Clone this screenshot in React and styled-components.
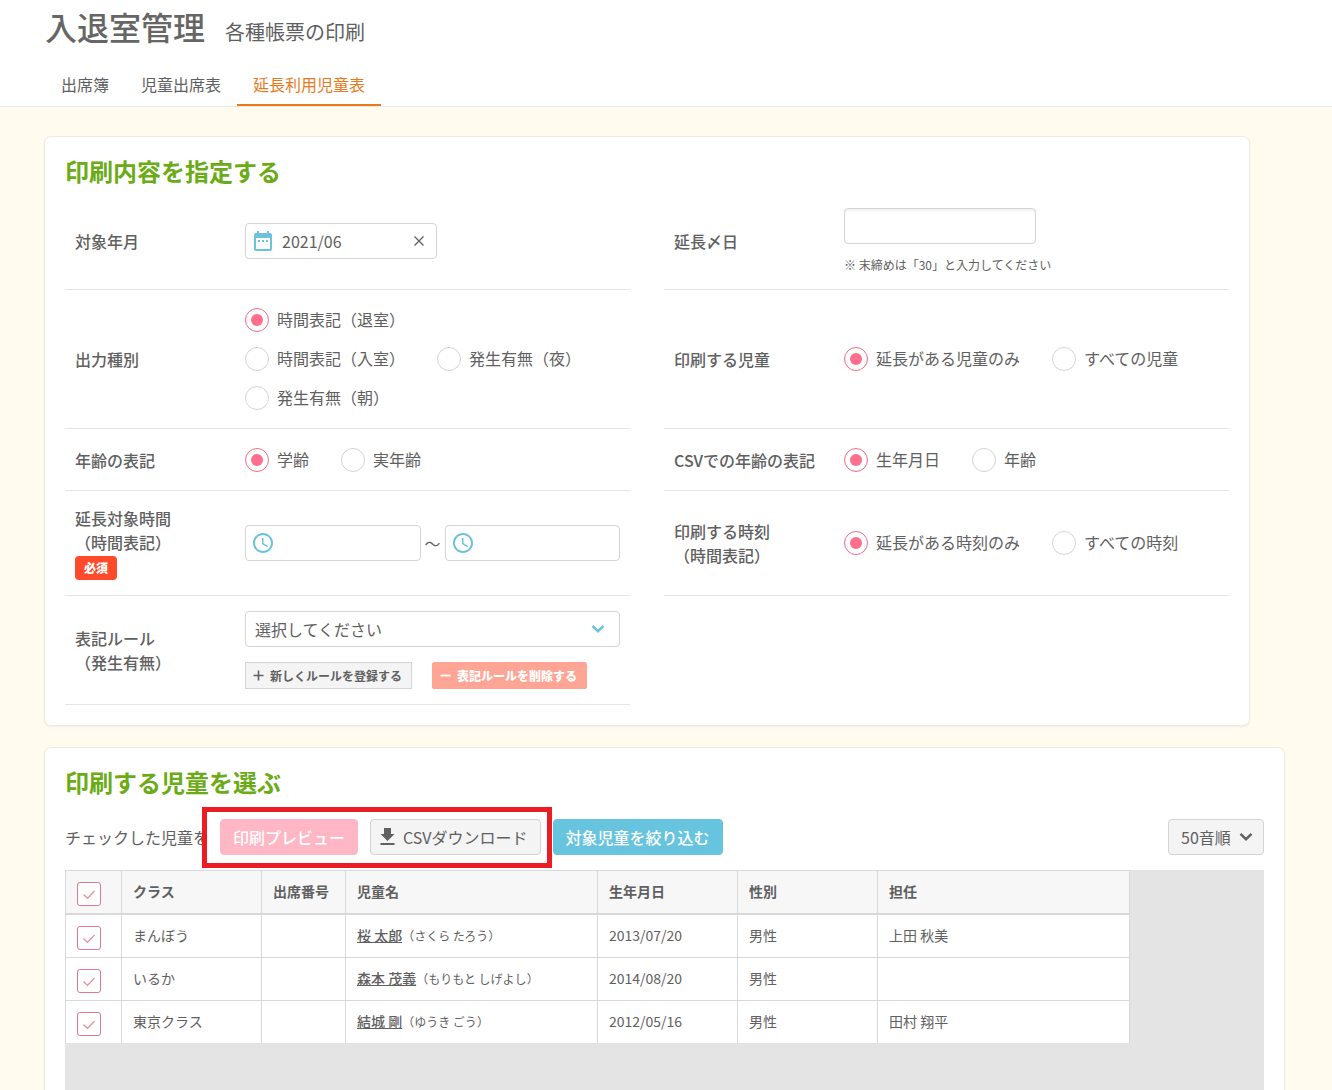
import React, { useId, useState } from "react";
import styled, { createGlobalStyle } from "styled-components";

const color = {
  text: "#606060",
  green: "#6aab16",
  orange: "#e87a1d",
  pink: "#ff6f8b",
  blue: "#6cc1dc",
  line: "#e6e6e6",
  border: "#d4d4d4",
  cream: "#fffbee",
  grey: "#f4f4f4",
};

const GlobalStyle = createGlobalStyle`
  *, *::before, *::after { box-sizing: border-box; }
  body {
    margin: 0;
    background: ${color.cream};
    color: ${color.text};
    font: 400 16px/24px "Noto Sans CJK JP", "Noto Sans", sans-serif;
  }
  h1, h2, p { margin: 0; }
  button, input, select { font: inherit; color: inherit; }
  svg { display: block; flex: none; }
`;

const Page = styled.div`
  min-height: 100vh;
  display: flex;
  flex-direction: column;
`;

const Header = styled.header`
  background: #fff;
  border-bottom: 1px solid #ece9e3;
  padding: 2px 44px 0 45px;
`;

const TitleRow = styled.div`
  display: flex;
  align-items: baseline;
  gap: 20px;
  padding-bottom: 16px;
`;

const Title = styled.h1`
  font-size: 32px;
  line-height: 48px;
  font-weight: 500;
  color: #666;
`;

const Subtitle = styled.p`
  font-size: 20px;
  line-height: 30px;
`;

const Tabs = styled.nav`
  display: flex;
`;

const Tab = styled.a`
  height: 40px;
  padding: 0 16px;
  line-height: 36px;
  text-decoration: none;
  color: ${(p) => (p.$active ? color.orange : color.text)};
  border-bottom: 2px solid ${(p) => (p.$active ? color.orange : "transparent")};
`;

const Main = styled.main`
  flex: 1;
  display: flex;
  flex-direction: column;
  gap: 21px;
  padding: 29px 47px 0 44px;
`;

const Card = styled.section`
  background: #fff;
  border: 1px solid #efebdf;
  border-radius: 7px;
  padding: 16px 20px 20px;
  box-shadow: 0 1px 2px rgba(0, 0, 0, 0.06);
`;

const SettingsCard = styled(Card)`
  margin-right: 35px;
`;

const ListCard = styled(Card)`
  flex: 1;
  display: flex;
  flex-direction: column;
  padding-bottom: 0;
  border-bottom: 0;
  border-radius: 7px 7px 0 0;
`;

const CardTitle = styled.h2`
  font-size: 24px;
  line-height: 36px;
  font-weight: 700;
  color: ${color.green};
`;

const FormGrid = styled.div`
  display: grid;
  grid-template-columns: repeat(2, minmax(0, 1fr));
  column-gap: 34px;
  margin-top: 4px;
`;

const FormRow = styled.div`
  display: grid;
  grid-template-columns: 170px minmax(0, 1fr);
  align-items: center;
  min-height: 62px;
  padding: 15px 10px;
  border-bottom: 1px solid ${color.line};
`;

const RowLabel = styled.div`
  font-weight: 500;
`;

const LabelLine = styled.span`
  display: block;
`;

const Badge = styled.span`
  display: block;
  width: max-content;
  margin-top: 2px;
  padding: 0 9px;
  border-radius: 4px;
  background: #ff4b2b;
  color: #fff;
  font-size: 12px;
  line-height: 24px;
  font-weight: 900;
`;

const Box = styled.div`
  display: flex;
  align-items: center;
  gap: 7px;
  width: ${(p) => p.$width || "auto"};
  flex: ${(p) => (p.$grow ? "1 1 0" : "none")};
  min-width: 0;
  height: 36px;
  padding: 0 5px;
  border: 1px solid ${color.border};
  border-radius: 4px;
  background: #fff;
`;

const BareInput = styled.input`
  flex: 1;
  min-width: 0;
  height: 34px;
  padding: 0;
  border: 0;
  outline: 0;
  background: transparent;
`;

const ClearButton = styled.button`
  display: grid;
  place-items: center;
  width: 24px;
  height: 24px;
  padding: 0;
  border: 0;
  background: none;
`;

const DayInput = styled.input`
  display: block;
  width: 192px;
  height: 36px;
  padding: 0 9px;
  border: 1px solid ${color.border};
  border-radius: 4px;
  background: #fff;
  box-shadow: inset 0 2px 2px rgba(0, 0, 0, 0.06);
`;

const Note = styled.p`
  margin-top: 12px;
  font-size: 12px;
  line-height: 18px;
`;

const TimeRange = styled.div`
  display: flex;
  align-items: center;
`;

const Tilde = styled.span`
  width: 24px;
  text-align: center;
`;

const RadioGroup = styled.div`
  display: flex;
  flex-wrap: wrap;
  row-gap: 15px;
  padding: 3px 0;
`;

const RadioLabel = styled.label`
  display: flex;
  gap: 8px;
  margin-right: 32px;
  line-height: 22px;
`;

const Radio = styled.input`
  appearance: none;
  display: grid;
  place-content: center;
  width: 24px;
  height: 24px;
  margin: 0;
  border: 1px solid ${color.border};
  border-radius: 50%;
  background: #fff;

  &:checked {
    border-color: #ec6d88;
  }
  &:checked::before {
    content: "";
    width: 12px;
    height: 12px;
    border-radius: 50%;
    background: ${color.pink};
  }
`;

const SelectWrap = styled.div`
  position: relative;
  width: ${(p) => p.$width || "100%"};

  svg {
    position: absolute;
    top: 0;
    bottom: 0;
    right: ${(p) => p.$arrowRight};
    margin: auto 0;
    pointer-events: none;
  }
`;

const Select = styled.select`
  appearance: none;
  display: block;
  width: 100%;
  height: 36px;
  padding: 0 ${(p) => (p.$muted ? "12px" : "9px")};
  border: 1px solid ${color.border};
  border-radius: 4px;
  background: ${(p) => (p.$muted ? color.grey : "#fff")};
`;

const RuleActions = styled.div`
  display: flex;
  gap: 20px;
  margin-top: 15px;
`;

const SmallButton = styled.button`
  display: flex;
  align-items: center;
  gap: 6px;
  height: 27px;
  padding: 0 9px 0 7px;
  border: 1px solid ${(p) => (p.$danger ? "#ffa596" : color.border)};
  border-radius: ${(p) => (p.$danger ? "2px" : "0")};
  background: ${(p) => (p.$danger ? "#ffa596" : color.grey)};
  color: ${(p) => (p.$danger ? "#fff" : color.text)};
  font-size: 12px;
  line-height: 18px;
  font-weight: ${(p) => (p.$danger ? 900 : 700)};
  white-space: nowrap;
`;

const Toolbar = styled.div`
  display: flex;
  align-items: center;
  margin-top: 19px;
`;

const Highlight = styled.div`
  position: relative;
  display: flex;
  gap: 12px;
  margin: 0 12px 0 11px;

  &::after {
    content: "";
    position: absolute;
    inset: -12px -11px -13px -18px;
    border: 5px solid #ec1c24;
    pointer-events: none;
  }
`;

const buttonTone = {
  pink: { bg: "#ffb6c5", border: "#ffb6c5", fg: "#fff", weight: 500 },
  blue: { bg: "#67c4de", border: "#67c4de", fg: "#fff", weight: 500 },
  grey: { bg: color.grey, border: color.border, fg: color.text, weight: 400 },
};

const Button = styled.button`
  display: flex;
  align-items: center;
  gap: 8px;
  height: 36px;
  padding: 0 12px;
  border: 1px solid ${(p) => buttonTone[p.$tone].border};
  border-radius: 4px;
  background: ${(p) => buttonTone[p.$tone].bg};
  color: ${(p) => buttonTone[p.$tone].fg};
  font-weight: ${(p) => buttonTone[p.$tone].weight};
  white-space: nowrap;
`;

const CsvButton = styled(Button)`
  padding-left: 9px;
`;

const SortArea = styled.div`
  margin-left: auto;
`;

const TableArea = styled.div`
  flex: 1;
  margin-top: 15px;
  min-height: 220px;
  overflow-x: auto;
  background: #e4e4e4;
`;

const Table = styled.table`
  table-layout: fixed;
  width: 1065px;
  border-spacing: 0;
  border-right: 1px solid #d9d9d9;
  background: #fff;
  font-size: 14px;
  line-height: 20px;
`;

const Col = styled.col`
  width: ${(p) => p.$width};
`;

const HeadCell = styled.th`
  height: 45px;
  padding: ${(p) => (p.$check ? "11px 11px 0" : "0 11px 2px")};
  vertical-align: ${(p) => (p.$check ? "top" : "middle")};
  border-top: 1px solid #d9d9d9;
  border-bottom: 2px solid #d9d9d9;
  border-left: 1px solid #d9d9d9;
  background: #f7f7f7;
  text-align: left;
  font-weight: 700;
`;

const Cell = styled.td`
  height: 43px;
  padding: ${(p) => (p.$check ? "11px 11px 0" : "0 11px 2px")};
  vertical-align: ${(p) => (p.$check ? "top" : "middle")};
  border-left: 1px solid #d9d9d9;
  border-bottom: 1px solid #d9d9d9;
  white-space: nowrap;

  tr:last-child > & {
    height: 42px;
    border-bottom: 0;
  }
`;

const NameLink = styled.a`
  color: inherit;
  font-weight: 500;
  text-decoration: underline;
`;

const Kana = styled.span`
  font-size: 12px;
`;

const CheckWrap = styled.label`
  position: relative;
  display: block;
  width: 24px;
  height: 24px;

  svg {
    position: absolute;
    inset: 0;
    pointer-events: none;
  }
`;

const Checkbox = styled.input`
  appearance: none;
  display: block;
  width: 24px;
  height: 24px;
  margin: 0;
  border: 1px solid #dc7a92;
  border-radius: 3px;
  background: #fff;

  &:not(:checked) + svg {
    display: none;
  }
`;

const CalendarIcon = () => (
  <svg width="24" height="24" viewBox="0 0 24 24" fill={color.blue} aria-hidden="true">
    <path d="M9 11H7v2h2v-2zm4 0h-2v2h2v-2zm4 0h-2v2h2v-2zm2-7h-1V2h-2v2H8V2H6v2H5c-1.110 0-1.990.9-1.990 2L3 20c0 1.100.89 2 2 2h14c1.100 0 2-.9 2-2V6c0-1.100-.9-2-2-2zm0 16H5V9h14v11z" />
  </svg>
);

const ClockIcon = () => (
  <svg width="24" height="24" viewBox="0 0 24 24" fill={color.blue} aria-hidden="true">
    <path d="M11.990 2C6.470 2 2 6.480 2 12s4.470 10 9.990 10C17.520 22 22 17.520 22 12S17.520 2 11.990 2zM12 20c-4.420 0-8-3.580-8-8s3.580-8 8-8 8 3.580 8 8-3.580 8-8 8z" />
    <path d="M12.500 7H11v6l5.250 3.150.75-1.230-4.500-2.670z" />
  </svg>
);

const CloseIcon = () => (
  <svg width="12" height="12" viewBox="0 0 12 12" stroke={color.text} strokeWidth="1.3" aria-hidden="true">
    <path d="M1.500 1.500l9 9M10.500 1.500l-9 9" />
  </svg>
);

const ChevronIcon = ({ stroke }) => (
  <svg width="14" height="10" viewBox="0 0 14 10" fill="none" stroke={stroke} strokeWidth="2.4" aria-hidden="true">
    <path d="M1.500 1.800L7 7.200l5.500-5.400" />
  </svg>
);

const PlusIcon = () => (
  <svg width="11" height="11" viewBox="0 0 11 11" stroke="currentColor" strokeWidth="1.6" aria-hidden="true">
    <path d="M5.500 0.500v10M0.500 5.500h10" />
  </svg>
);

const MinusIcon = () => (
  <svg width="11" height="11" viewBox="0 0 11 11" stroke="currentColor" strokeWidth="1.8" aria-hidden="true">
    <path d="M0.500 5.500h10" />
  </svg>
);

const DownloadIcon = () => (
  <svg width="15" height="18" viewBox="4.5 3 15 18" fill="currentColor" aria-hidden="true">
    <path d="M19 9h-3.500V3h-7v6H5l7 7 7-7zM5 18v2h14v-2H5z" />
  </svg>
);

const CheckMark = () => (
  <svg width="24" height="24" viewBox="0 0 24 24" fill="none" stroke="#e58ba0" strokeWidth="1.2" aria-hidden="true">
    <path d="M6.500 12.500l4 4 7-7.500" />
  </svg>
);

function RadioField({ lines, options }) {
  const id = useId();
  const [value, setValue] = useState(options[0]);
  return (
    <FormRow>
      <RowLabel id={id}>
        {lines.map((line) => (
          <LabelLine key={line}>{line}</LabelLine>
        ))}
      </RowLabel>
      <RadioGroup role="radiogroup" aria-labelledby={id}>
        {options.map((option) => (
          <RadioLabel key={option}>
            <Radio type="radio" name={id} checked={value === option} onChange={() => setValue(option)} />
            {option}
          </RadioLabel>
        ))}
      </RadioGroup>
    </FormRow>
  );
}

function TimeInput({ label }) {
  return (
    <Box $grow>
      <ClockIcon />
      <BareInput type="text" aria-label={label} />
    </Box>
  );
}

function CheckControl({ label }) {
  return (
    <CheckWrap>
      <Checkbox type="checkbox" aria-label={label} defaultChecked />
      <CheckMark />
    </CheckWrap>
  );
}

const columns = [
  ["クラス", "140px"],
  ["出席番号", "84px"],
  ["児童名", "252px"],
  ["生年月日", "140px"],
  ["性別", "140px"],
  ["担任", "auto"],
];

const children = [
  { room: "まんぼう", name: "桜 太郎", kana: "さくら たろう", birth: "2013/07/20", sex: "男性", teacher: "上田 秋美" },
  { room: "いるか", name: "森本 茂義", kana: "もりもと しげよし", birth: "2014/08/20", sex: "男性", teacher: "" },
  { room: "東京クラス", name: "結城 剛", kana: "ゆうき ごう", birth: "2012/05/16", sex: "男性", teacher: "田村 翔平" },
];

export default function App() {
  const [month, setMonth] = useState("2021/06");

  return (
    <Page>
      <GlobalStyle />
      <Header>
        <TitleRow>
          <Title>入退室管理</Title>
          <Subtitle>各種帳票の印刷</Subtitle>
        </TitleRow>
        <Tabs>
          <Tab href="#attendance">出席簿</Tab>
          <Tab href="#children">児童出席表</Tab>
          <Tab href="#extended" $active aria-current="page">延長利用児童表</Tab>
        </Tabs>
      </Header>

      <Main>
        <SettingsCard>
          <CardTitle>印刷内容を指定する</CardTitle>
          <FormGrid>
            <FormRow>
              <RowLabel as="label" htmlFor="month">対象年月</RowLabel>
              <Box $width="192px">
                <CalendarIcon />
                <BareInput id="month" type="text" value={month} onChange={(e) => setMonth(e.target.value)} />
                <ClearButton type="button" aria-label="クリア" onClick={() => setMonth("")}>
                  <CloseIcon />
                </ClearButton>
              </Box>
            </FormRow>
            <FormRow>
              <RowLabel as="label" htmlFor="closing">延長〆日</RowLabel>
              <div>
                <DayInput id="closing" type="text" />
                <Note>※ 末締めは「30」と入力してください</Note>
              </div>
            </FormRow>

            <RadioField
              lines={["出力種別"]}
              options={["時間表記（退室）", "時間表記（入室）", "発生有無（夜）", "発生有無（朝）"]}
            />
            <RadioField lines={["印刷する児童"]} options={["延長がある児童のみ", "すべての児童"]} />
            <RadioField lines={["年齢の表記"]} options={["学齢", "実年齢"]} />
            <RadioField lines={["CSVでの年齢の表記"]} options={["生年月日", "年齢"]} />

            <FormRow>
              <RowLabel>
                <LabelLine>延長対象時間</LabelLine>
                <LabelLine>（時間表記）</LabelLine>
                <Badge>必須</Badge>
              </RowLabel>
              <TimeRange>
                <TimeInput label="開始時間" />
                <Tilde>～</Tilde>
                <TimeInput label="終了時間" />
              </TimeRange>
            </FormRow>
            <RadioField lines={["印刷する時刻", "（時間表記）"]} options={["延長がある時刻のみ", "すべての時刻"]} />

            <FormRow>
              <RowLabel as="label" htmlFor="rule">
                <LabelLine>表記ルール</LabelLine>
                <LabelLine>（発生有無）</LabelLine>
              </RowLabel>
              <div>
                <SelectWrap $arrowRight="15px">
                  <Select id="rule">
                    <option>選択してください</option>
                  </Select>
                  <ChevronIcon stroke={color.blue} />
                </SelectWrap>
                <RuleActions>
                  <SmallButton type="button">
                    <PlusIcon />
                    新しくルールを登録する
                  </SmallButton>
                  <SmallButton type="button" $danger>
                    <MinusIcon />
                    表記ルールを削除する
                  </SmallButton>
                </RuleActions>
              </div>
            </FormRow>
          </FormGrid>
        </SettingsCard>

        <ListCard>
          <CardTitle>印刷する児童を選ぶ</CardTitle>
          <Toolbar>
            <span>チェックした児童を</span>
            <Highlight>
              <Button type="button" $tone="pink">印刷プレビュー</Button>
              <CsvButton type="button" $tone="grey">
                <DownloadIcon />
                CSVダウンロード
              </CsvButton>
            </Highlight>
            <Button type="button" $tone="blue">対象児童を絞り込む</Button>
            <SortArea>
              <SelectWrap $width="96px" $arrowRight="11px">
                <Select $muted aria-label="並び順">
                  <option>50音順</option>
                </Select>
                <ChevronIcon stroke={color.text} />
              </SelectWrap>
            </SortArea>
          </Toolbar>
          <TableArea>
            <Table>
              <colgroup>
                <Col $width="56px" />
                {columns.map(([label, width]) => (
                  <Col key={label} $width={width} />
                ))}
              </colgroup>
              <thead>
                <tr>
                  <HeadCell $check>
                    <CheckControl label="すべて選択" />
                  </HeadCell>
                  {columns.map(([label]) => (
                    <HeadCell key={label}>{label}</HeadCell>
                  ))}
                </tr>
              </thead>
              <tbody>
                {children.map((child) => (
                  <tr key={child.name}>
                    <Cell $check>
                      <CheckControl label={child.name} />
                    </Cell>
                    <Cell>{child.room}</Cell>
                    <Cell />
                    <Cell>
                      <NameLink href="#child">{child.name}</NameLink>
                      <Kana>（{child.kana}）</Kana>
                    </Cell>
                    <Cell>{child.birth}</Cell>
                    <Cell>{child.sex}</Cell>
                    <Cell>{child.teacher}</Cell>
                  </tr>
                ))}
              </tbody>
            </Table>
          </TableArea>
        </ListCard>
      </Main>
    </Page>
  );
}
